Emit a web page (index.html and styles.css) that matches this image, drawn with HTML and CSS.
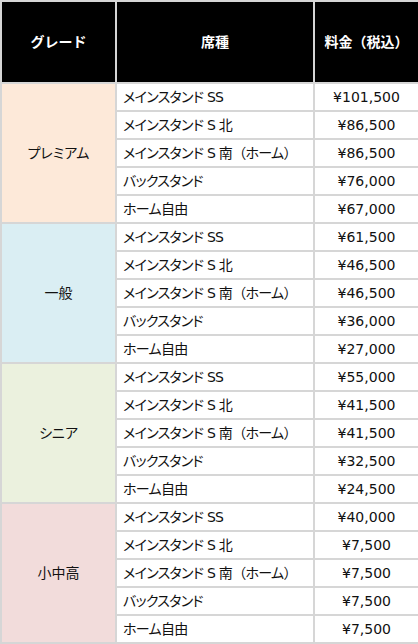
FILE: index.html
```html
<!DOCTYPE html>
<html lang="ja">
<head>
<meta charset="utf-8">
<link rel="stylesheet" href="styles.css">
</head>
<body>
<table class="price-table">
  <colgroup>
    <col class="c-grade">
    <col class="c-seat">
    <col class="c-price">
  </colgroup>
  <thead>
    <tr class="head-row">
      <th>グレード</th>
      <th>席種</th>
      <th>料金（税込）</th>
    </tr>
  </thead>
  <tbody>
    <tr><td class="grade g-premium" rowspan="5">プレミアム</td><td class="seat">メインスタンド SS</td><td class="price">¥101,500</td></tr>
    <tr><td class="seat">メインスタンド S 北</td><td class="price">¥86,500</td></tr>
    <tr><td class="seat">メインスタンド S 南<span class="paren">（</span>ホーム<span class="paren">）</span></td><td class="price">¥86,500</td></tr>
    <tr><td class="seat">バックスタンド</td><td class="price">¥76,000</td></tr>
    <tr><td class="seat">ホーム自由</td><td class="price">¥67,000</td></tr>

    <tr><td class="grade g-general" rowspan="5">一般</td><td class="seat">メインスタンド SS</td><td class="price">¥61,500</td></tr>
    <tr><td class="seat">メインスタンド S 北</td><td class="price">¥46,500</td></tr>
    <tr><td class="seat">メインスタンド S 南<span class="paren">（</span>ホーム<span class="paren">）</span></td><td class="price">¥46,500</td></tr>
    <tr><td class="seat">バックスタンド</td><td class="price">¥36,000</td></tr>
    <tr><td class="seat">ホーム自由</td><td class="price">¥27,000</td></tr>

    <tr><td class="grade g-senior" rowspan="5">シニア</td><td class="seat">メインスタンド SS</td><td class="price">¥55,000</td></tr>
    <tr><td class="seat">メインスタンド S 北</td><td class="price">¥41,500</td></tr>
    <tr><td class="seat">メインスタンド S 南<span class="paren">（</span>ホーム<span class="paren">）</span></td><td class="price">¥41,500</td></tr>
    <tr><td class="seat">バックスタンド</td><td class="price">¥32,500</td></tr>
    <tr><td class="seat">ホーム自由</td><td class="price">¥24,500</td></tr>

    <tr><td class="grade g-student" rowspan="5">小中高</td><td class="seat">メインスタンド SS</td><td class="price">¥40,000</td></tr>
    <tr><td class="seat">メインスタンド S 北</td><td class="price">¥7,500</td></tr>
    <tr><td class="seat">メインスタンド S 南<span class="paren">（</span>ホーム<span class="paren">）</span></td><td class="price">¥7,500</td></tr>
    <tr><td class="seat">バックスタンド</td><td class="price">¥7,500</td></tr>
    <tr><td class="seat">ホーム自由</td><td class="price">¥7,500</td></tr>
  </tbody>
</table>
</body>
</html>
```

FILE: styles.css
```css
html, body {
  margin: 0;
  padding: 0;
  background: #ffffff;
}

body {
  font-family: "DejaVu Sans", "Noto Sans CJK JP", sans-serif;
  font-size: 14px;
  color: #111111;
}

.price-table {
  width: 418px;
  border-collapse: collapse;
  table-layout: fixed;
}

.c-grade { width: 115px; }
.c-seat { width: 198px; }
.c-price { width: 105px; }

.price-table th,
.price-table td {
  border: 2px solid #d6d6d6;
  padding: 0 6px;
  line-height: 18px;
  white-space: nowrap;
  overflow: hidden;
}

.head-row {
  height: 82px;
}

.head-row th {
  background: #000000;
  color: #ffffff;
  font-weight: bold;
  font-size: 14px;
  text-align: center;
  padding: 0;
}

.price-table tbody tr {
  height: 28px;
}

.price-table tbody td {
  font-feature-settings: "palt";
}

.paren {
  font-feature-settings: normal;
}

.grade {
  text-align: center;
}

.g-premium { background: #fde9d9; }
.g-general { background: #daeef3; }
.g-senior { background: #ebf1de; }
.g-student { background: #f2dcdb; }

.seat {
  text-align: left;
  letter-spacing: -0.7px;
}

.price {
  text-align: center;
}
```
